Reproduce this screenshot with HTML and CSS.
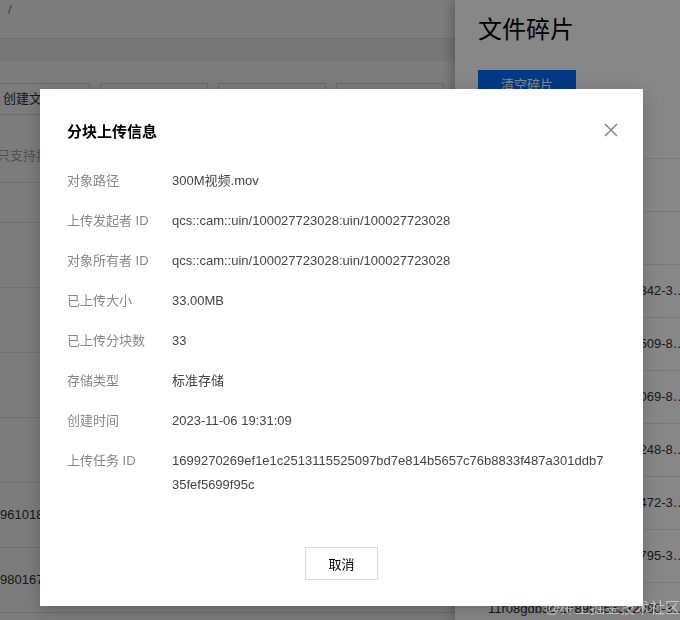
FILE: index.html
```html
<!DOCTYPE html>
<html>
<head>
    <title>分块上传信息</title>
    <link rel="stylesheet" href="styles.css">
</head>
<body>
    <div class="page">
        <div class="main">
            <div class="crumb">/</div>
            <div class="band"></div>
            <div class="band band-light"></div>
            <div class="toolbar">
                <span class="tool-btn tool-first">创建文件夹</span>
                <span class="tool-btn">上传文件</span>
                <span class="tool-btn">更多操作</span>
                <span class="tool-btn">文件碎片</span>
            </div>
            <div class="search">只支持按前缀搜索</div>
            <div class="table">
                <div class="tr th"></div>
                <div class="tr"></div>
                <div class="tr"></div>
                <div class="tr"></div>
                <div class="tr"></div>
                <div class="tr"><span class="cell">961018.mov</span></div>
                <div class="tr"><span class="cell">980167.mov</span></div>
            </div>
        </div>
        <div class="drawer">
            <h2 class="drawer-title">文件碎片</h2>
            <span class="btn-primary">清空碎片</span>
            <div class="frag-table">
                <div class="frag-row frag-head"></div>
                <div class="frag-row"><span class="frag-name">300M视频.mov</span></div>
                <div class="frag-row"><span class="frag-name">100M视频.mov</span></div>
                <div class="frag-row"><span class="frag-name">11r08gdb3c-16895055301342-3.mov</span></div>
                <div class="frag-row"><span class="frag-name">11r08gdb3c-16895055302509-8.mov</span></div>
                <div class="frag-row"><span class="frag-name">11r08gdb3c-16895055303069-8.mov</span></div>
                <div class="frag-row"><span class="frag-name">11r08gdb3c-16895055304248-8.mov</span></div>
                <div class="frag-row"><span class="frag-name">11r08gdb3c-16895055305472-3.mov</span></div>
                <div class="frag-row"><span class="frag-name">11r08gdb3c-16895055306795-3.mov</span></div>
                <div class="frag-row"><span class="frag-name">11r08gdb3c-16895055332080-3.mov</span></div>
            </div>
        </div>
    </div>

    <div class="mask"></div>

    <div class="modal">
        <div class="modal-head">
            <span class="modal-title">分块上传信息</span>
            <svg class="close" width="14" height="14" viewBox="0 0 14 14">
                <path d="M1 1L13 13M13 1L1 13" stroke="#888" stroke-width="1.6" fill="none"/>
            </svg>
        </div>
        <div class="info">
            <div class="info-row"><span class="info-label">对象路径</span><span class="info-value">300M视频.mov</span></div>
            <div class="info-row"><span class="info-label">上传发起者 ID</span><span class="info-value">qcs::cam::uin/100027723028:uin/100027723028</span></div>
            <div class="info-row"><span class="info-label">对象所有者 ID</span><span class="info-value">qcs::cam::uin/100027723028:uin/100027723028</span></div>
            <div class="info-row"><span class="info-label">已上传大小</span><span class="info-value">33.00MB</span></div>
            <div class="info-row"><span class="info-label">已上传分块数</span><span class="info-value">33</span></div>
            <div class="info-row"><span class="info-label">存储类型</span><span class="info-value">标准存储</span></div>
            <div class="info-row"><span class="info-label">创建时间</span><span class="info-value">2023-11-06 19:31:09</span></div>
            <div class="info-row"><span class="info-label">上传任务 ID</span><span class="info-value">1699270269ef1e1c2513115525097bd7e814b5657c76b8833f487a301ddb735fef5699f95c</span></div>
        </div>
        <div class="modal-foot">
            <button class="btn-cancel">取消</button>
        </div>
    </div>

    <div class="watermark">@稀土掘金技术社区</div>
</body>
</html>
```

FILE: styles.css
```css
body {
    margin: 0;
    width: 680px;
    height: 620px;
    overflow: hidden;
    font-family: "Liberation Sans", "Noto Sans CJK SC", sans-serif;
    font-size: 13px;
    color: #333;
}
.page {
    display: flex;
    height: 620px;
}
.main {
    position: relative;
    flex: none;
    width: 455px;
    overflow: hidden;
    background-color: #fff;
}
.main::after {
    content: "";
    position: absolute;
    inset: 0;
    background-color: rgba(0, 0, 0, 0.08);
}
.crumb {
    height: 39px;
    padding: 2px 0 0 8px;
    box-sizing: border-box;
    line-height: 16px;
    color: #888;
    border-bottom: 1px solid #e2e2e2;
}
.band {
    height: 22px;
    background-color: #f2f2f2;
}
.band-light {
    background-color: #fff;
}
.toolbar {
    display: flex;
    gap: 10px;
    margin-left: -18px;
    white-space: nowrap;
}
.tool-btn {
    flex: none;
    width: 108px;
    height: 32px;
    line-height: 30px;
    box-sizing: border-box;
    border: 1px solid #ddd;
    text-align: center;
    color: #333;
}
.tool-first {
    padding-left: 20px;
    text-align: left;
}
.search {
    margin: 26px 0 0 -3px;
    height: 30px;
    line-height: 30px;
    color: #aaa;
}
.table {
    margin-top: 11px;
    border-top: 1px solid #e5e5e5;
}
.tr {
    height: 65px;
    line-height: 64px;
    border-bottom: 1px solid #e5e5e5;
    box-sizing: border-box;
}
.tr.th {
    height: 40px;
}
.cell {
    color: #333;
}
.drawer {
    position: relative;
    z-index: 1;
    flex: 1;
    overflow: hidden;
    padding: 14px 0 0 23px;
    background-color: #fff;
    box-shadow: -3px 0 10px rgba(0, 0, 0, 0.25);
}
.drawer-title {
    margin: 0;
    font-size: 24px;
    font-weight: normal;
    line-height: 32px;
    color: #000;
}
.btn-primary {
    display: inline-block;
    margin-top: 24px;
    width: 98px;
    height: 30px;
    line-height: 30px;
    text-align: center;
    color: #fff;
    background-color: #006eff;
}
.frag-table {
    margin-top: 6px;
}
.frag-row {
    height: 53px;
    box-sizing: border-box;
    border-bottom: 1px solid #e5e5e5;
    padding-left: 10px;
    line-height: 52px;
}
.frag-name {
    display: block;
    width: 200px;
    overflow: hidden;
    white-space: nowrap;
    text-overflow: ellipsis;
    color: #333;
}
.mask {
    position: fixed;
    inset: 0;
    z-index: 5;
    background-color: rgba(0, 0, 0, 0.47);
}
.modal {
    position: absolute;
    z-index: 6;
    left: 40px;
    top: 89px;
    width: 603px;
    box-sizing: border-box;
    padding: 24px 27px 26px;
    background-color: #fff;
    box-shadow: 0 4px 16px rgba(0, 0, 0, 0.2);
}
.modal-head {
    display: flex;
    align-items: center;
    justify-content: space-between;
    height: 34px;
}
.modal-title {
    font-size: 15px;
    font-weight: bold;
    color: #000;
}
.close {
    display: block;
    margin-right: -2px;
}
.info {
    margin-top: 14px;
}
.info-row {
    display: grid;
    grid-template-columns: 105px 436px;
    padding: 8px 0;
    line-height: 24px;
}
.info-label {
    color: #888;
}
.info-value {
    color: #444;
    word-break: break-all;
}
.modal-foot {
    display: flex;
    justify-content: center;
    margin-top: 42px;
}
.btn-cancel {
    width: 73px;
    height: 33px;
    border: 1px solid #ddd;
    background-color: #fff;
    font: inherit;
    color: #000;
}
.watermark {
    position: absolute;
    z-index: 7;
    right: 0;
    bottom: 2px;
    font-size: 15px;
    line-height: 20px;
    color: rgba(255, 255, 255, 0.5);
}
```
